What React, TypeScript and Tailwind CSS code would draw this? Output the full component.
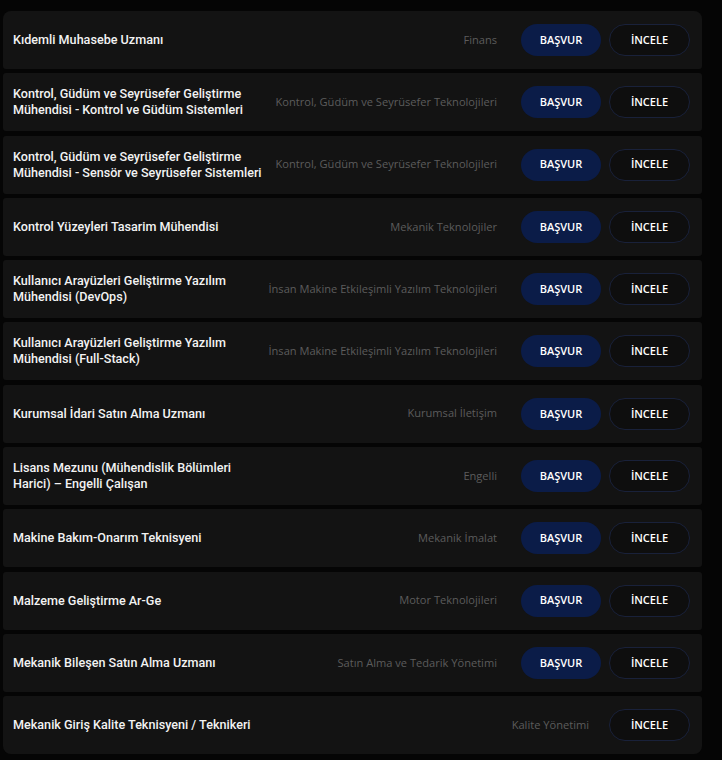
const jobs: { title: string; dept: string; apply: boolean }[] = [
  { title: "Kıdemli Muhasebe Uzmanı", dept: "Finans", apply: true },
  { title: "Kontrol, Güdüm ve Seyrüsefer Geliştirme Mühendisi - Kontrol ve Güdüm Sistemleri", dept: "Kontrol, Güdüm ve Seyrüsefer Teknolojileri", apply: true },
  { title: "Kontrol, Güdüm ve Seyrüsefer Geliştirme Mühendisi - Sensör ve Seyrüsefer Sistemleri", dept: "Kontrol, Güdüm ve Seyrüsefer Teknolojileri", apply: true },
  { title: "Kontrol Yüzeyleri Tasarim Mühendisi", dept: "Mekanik Teknolojiler", apply: true },
  { title: "Kullanıcı Arayüzleri Geliştirme Yazılım Mühendisi (DevOps)", dept: "İnsan Makine Etkileşimli Yazılım Teknolojileri", apply: true },
  { title: "Kullanıcı Arayüzleri Geliştirme Yazılım Mühendisi (Full-Stack)", dept: "İnsan Makine Etkileşimli Yazılım Teknolojileri", apply: true },
  { title: "Kurumsal İdari Satın Alma Uzmanı", dept: "Kurumsal İletişim", apply: true },
  { title: "Lisans Mezunu (Mühendislik Bölümleri Harici) – Engelli Çalışan", dept: "Engelli", apply: true },
  { title: "Makine Bakım-Onarım Teknisyeni", dept: "Mekanik İmalat", apply: true },
  { title: "Malzeme Geliştirme Ar-Ge", dept: "Motor Teknolojileri", apply: true },
  { title: "Mekanik Bileşen Satın Alma Uzmanı", dept: "Satın Alma ve Tedarik Yönetimi", apply: true },
  { title: "Mekanik Giriş Kalite Teknisyeni / Teknikeri", dept: "Kalite Yönetimi", apply: false },
];

export default function App() {
  return (
    <div className="min-h-[760px] w-[722px] bg-[#050505] pt-[11px] pl-[3px]">
      <div className="flex w-[699px] flex-col gap-[4.3px] overflow-hidden rounded-lg">
        {jobs.map((job, i) => (
          <div
            key={i}
            className="flex h-[58px] items-center rounded-[3px] bg-[#131313] pl-[10px] pr-[12px]"
          >
            <div className="w-[254px] shrink-0 font-['Roboto',sans-serif] text-[12.6px] font-medium leading-[16px] text-[#f2f2f2]">
              {job.title}
            </div>
            <div
              className={
                job.apply
                  ? "flex min-w-0 flex-1 justify-end pr-[24px] font-['Open_Sans',sans-serif] text-[11.1px] text-[#5c5c5c]"
                  : "flex min-w-0 flex-1 justify-end pr-[20px] font-['Open_Sans',sans-serif] text-[11.1px] text-[#5c5c5c]"
              }
            >
              <span className="whitespace-nowrap">{job.dept}</span>
            </div>
            <div className="flex shrink-0 gap-2 font-['Open_Sans',sans-serif] text-[11px] font-semibold">
              {job.apply && (
                <button className="flex h-[32px] w-[80px] items-center justify-center rounded-full bg-[#0b1c48] text-white">
                  BAŞVUR
                </button>
              )}
              <button className="flex h-[32px] w-[81px] items-center justify-center rounded-full border border-[#19213a] bg-[#0e0e0e] text-white">
                İNCELE
              </button>
            </div>
          </div>
        ))}
      </div>
    </div>
  );
}
